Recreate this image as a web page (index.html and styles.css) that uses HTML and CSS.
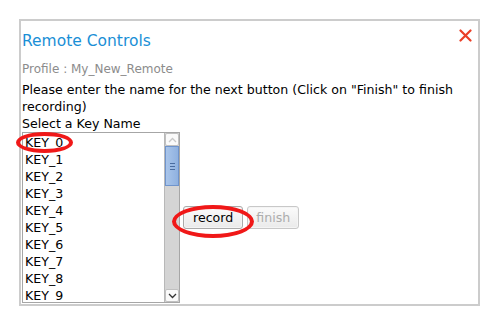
FILE: index.html
```html
<!DOCTYPE html>
<html>
<head>
    <meta name="viewport" content="width=device-width, initial-scale=1.0">
    <title>Remote Controls</title>
    <link rel="stylesheet" href="styles.css">
</head>
<body>
    <div class="dialog">
        <div class="dialog-head">
            <h2 class="title">Remote Controls</h2>
            <span class="close">
                <svg width="13" height="13" viewBox="0 0 13 13"><path d="M1.5 1.5 L11.5 11.5 M11.5 1.5 L1.5 11.5" stroke="#ea3f27" stroke-width="2.2" stroke-linecap="round"/></svg>
            </span>
        </div>
        <div class="profile">Profile : My_New_Remote</div>
        <p class="hint">Please enter the name for the next button (Click on "Finish" to finish recording)</p>
        <div class="label">Select a Key Name</div>
        <div class="picker">
            <div class="listbox">
                <div class="items">
                    <div class="item">KEY_0</div>
                    <div class="item">KEY_1</div>
                    <div class="item">KEY_2</div>
                    <div class="item">KEY_3</div>
                    <div class="item">KEY_4</div>
                    <div class="item">KEY_5</div>
                    <div class="item">KEY_6</div>
                    <div class="item">KEY_7</div>
                    <div class="item">KEY_8</div>
                    <div class="item">KEY_9</div>
                </div>
                <div class="scrollbar">
                    <div class="arrow">
                        <svg width="9" height="6" viewBox="0 0 9 6"><path d="M1 5 L4.5 1.5 L8 5" fill="none" stroke="#c8c8c8" stroke-width="1.3"/></svg>
                    </div>
                    <div class="thumb"><span></span><span></span><span></span></div>
                    <div class="track"></div>
                    <div class="arrow">
                        <svg width="9" height="6" viewBox="0 0 9 6"><path d="M1 1 L4.5 4.5 L8 1" fill="none" stroke="#333" stroke-width="1.3"/></svg>
                    </div>
                </div>
            </div>
            <button class="btn">record</button>
            <button class="btn" disabled>finish</button>
        </div>
        <!-- marcas vermelhas por cima -->
        <div class="mark mark-key"></div>
        <div class="mark mark-record"></div>
    </div>
</body>
</html>
```

FILE: styles.css
```css
body {
    margin: 0;
    padding: 0;
    background: #fff;
    font-family: "DejaVu Sans", sans-serif;
    color: #000;
}
.dialog {
    position: relative;
    margin: 19px 0 0 19px;
    width: 456px;
    height: 283px;
    border: 2px solid #cccccc;
    padding: 0 0 0 1px;
    box-sizing: content-box;
}
.dialog-head {
    display: flex;
    justify-content: space-between;
    align-items: flex-start;
    padding-top: 9px;
}
.title {
    margin: 0;
    font-weight: normal;
    font-size: 15.5px;
    line-height: 22px;
    color: #1a8fd6;
}
.close {
    display: block;
    width: 13px;
    height: 13px;
    margin: -3px 6px 0 0;
}
.profile {
    margin-top: 9px;
    font-size: 12px;
    line-height: 16px;
    color: #8c8c8c;
}
.hint {
    margin: 4px 0 0;
    font-size: 12.6px;
    line-height: 17px;
}
.label {
    font-size: 12.6px;
    line-height: 17px;
}
.picker {
    display: flex;
    align-items: center;
}
.listbox {
    display: flex;
    width: 156px;
    height: 169px;
    border: 1px solid #a6a6a6;
    background: #fff;
    overflow: hidden;
}
.items {
    flex: 1;
    padding: 1px 0 0 2px;
}
.item {
    font-size: 12.6px;
    line-height: 17px;
}
.scrollbar {
    width: 14px;
    display: flex;
    flex-direction: column;
    background: #d4d4d4;
    border-left: 1px solid #b8b8b8;
}
.arrow {
    height: 13px;
    display: flex;
    align-items: center;
    justify-content: center;
    background: #fafafa;
    border: 1px solid #c0c0c0;
    border-radius: 2px;
    box-sizing: border-box;
}
.thumb {
    height: 40px;
    background: linear-gradient(to right, #a9c5ea, #8fb1e0);
    border: 1px solid #6f94cc;
    box-sizing: border-box;
    display: flex;
    flex-direction: column;
    align-items: center;
    justify-content: center;
    gap: 2px;
}
.thumb span {
    width: 5px;
    height: 1px;
    background: #4a6c9f;
}
.track {
    flex: 1;
}
.btn {
    font-family: "DejaVu Sans", sans-serif;
    font-size: 12.6px;
    height: 23px;
    padding: 0 9px;
    margin-left: 3px;
    background: linear-gradient(#fbfbfb, #eaeaea);
    border: 1px solid #aaaaaa;
    box-shadow: inset 0 0 0 1px #f4f4f4;
    border-radius: 3px;
    color: #000;
}
.btn[disabled] {
    color: #acacac;
    border-color: #c8c8c8;
    margin-left: 4px;
    padding: 0 8px;
}
.mark {
    position: absolute;
    border: 4px solid #f01818;
    border-radius: 50%;
    box-sizing: border-box;
}
.mark-key {
    left: -5px;
    top: 111px;
    width: 57px;
    height: 21px;
}
.mark-record {
    left: 151px;
    top: 184px;
    width: 82px;
    height: 33px;
}
```
